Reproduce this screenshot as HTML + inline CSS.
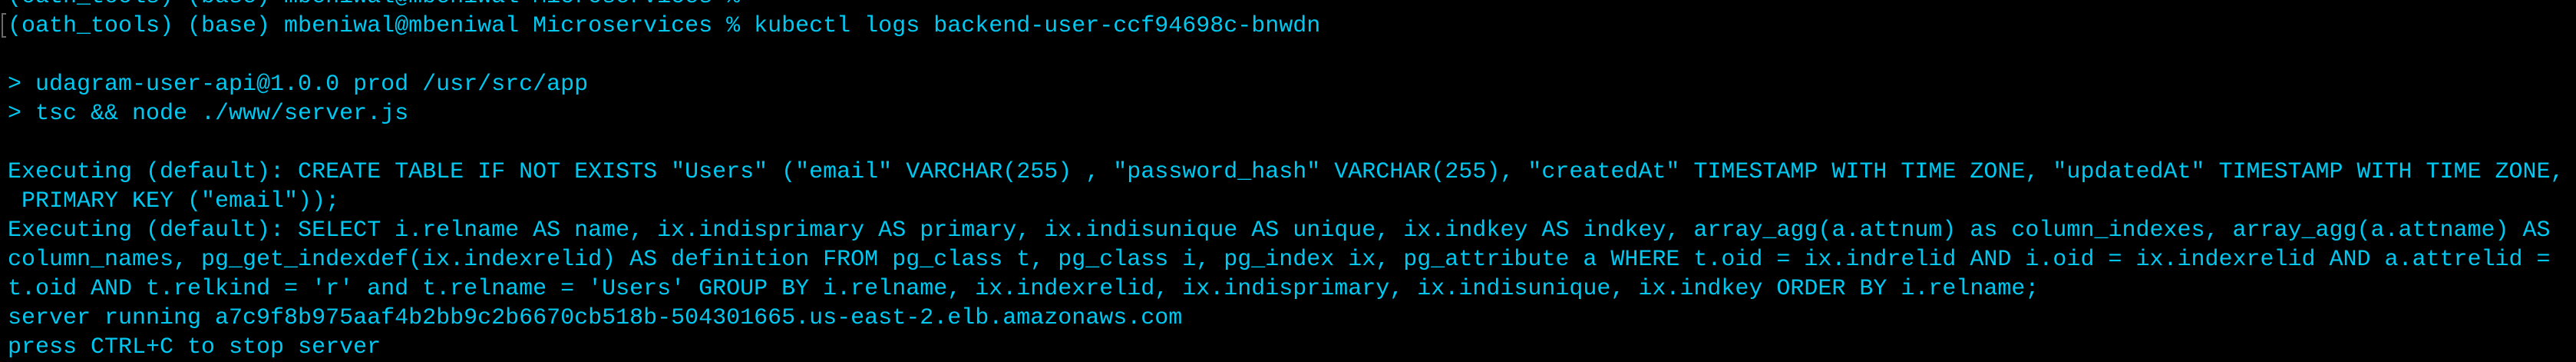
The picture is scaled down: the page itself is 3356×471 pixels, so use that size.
<!DOCTYPE html>
<html>
<head>
<meta charset="utf-8">
<style>
  html,body{margin:0;padding:0;background:#000;}
  body{width:3356px;height:470px;overflow:hidden;position:relative;}
  pre{
    position:absolute;left:10px;top:-23px;margin:0;
    font-family:"Liberation Mono","DejaVu Sans Mono",monospace;
    font-size:30px;line-height:38px;color:#00c8f0;white-space:pre;
  }
  .mark{position:absolute;left:2px;top:17px;width:4px;height:28px;border:2px solid #6a6a6a;border-right:none;}
</style>
</head>
<body>
<div class="mark"></div>
<pre>(oath_tools) (base) mbeniwal@mbeniwal Microservices % 
(oath_tools) (base) mbeniwal@mbeniwal Microservices % kubectl logs backend-user-ccf94698c-bnwdn

&gt; udagram-user-api@1.0.0 prod /usr/src/app
&gt; tsc &amp;&amp; node ./www/server.js

Executing (default): CREATE TABLE IF NOT EXISTS "Users" ("email" VARCHAR(255) , "password_hash" VARCHAR(255), "createdAt" TIMESTAMP WITH TIME ZONE, "updatedAt" TIMESTAMP WITH TIME ZONE,
 PRIMARY KEY ("email"));
Executing (default): SELECT i.relname AS name, ix.indisprimary AS primary, ix.indisunique AS unique, ix.indkey AS indkey, array_agg(a.attnum) as column_indexes, array_agg(a.attname) AS
column_names, pg_get_indexdef(ix.indexrelid) AS definition FROM pg_class t, pg_class i, pg_index ix, pg_attribute a WHERE t.oid = ix.indrelid AND i.oid = ix.indexrelid AND a.attrelid =
t.oid AND t.relkind = 'r' and t.relname = 'Users' GROUP BY i.relname, ix.indexrelid, ix.indisprimary, ix.indisunique, ix.indkey ORDER BY i.relname;
server running a7c9f8b975aaf4b2bb9c2b6670cb518b-504301665.us-east-2.elb.amazonaws.com
press CTRL+C to stop server</pre>
</body>
</html>
